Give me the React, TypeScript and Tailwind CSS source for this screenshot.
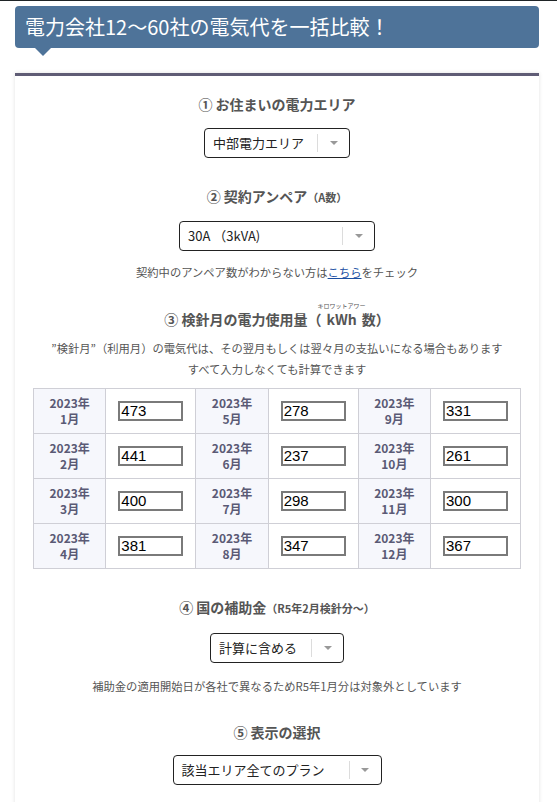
import React from 'react'

const jp = { fontFamily: '"Noto Sans CJK JP", "Noto Sans", sans-serif' }

const months = [
    { m: '1月', v: '473' }, { m: '5月', v: '278' }, { m: '9月', v: '331' },
    { m: '2月', v: '441' }, { m: '6月', v: '237' }, { m: '10月', v: '261' },
    { m: '3月', v: '400' }, { m: '7月', v: '298' }, { m: '11月', v: '300' },
    { m: '4月', v: '381' }, { m: '8月', v: '347' }, { m: '12月', v: '367' },
]

function Select({ label, width }: { label: string; width: string }) {
    return (
        <div className={`${width} h-[30px] mx-auto flex items-center border border-[#222] rounded-[4px] bg-white`}>
            <span className="flex-1 pl-[8px] text-[13px] text-[#222] whitespace-nowrap">{label}</span>
            <span className="w-px h-[18px] bg-[#dcdcdc]" />
            <span className="w-[31px] flex justify-center">
                <span className="block w-0 h-0 border-l-[4px] border-r-[4px] border-t-[4px] border-l-transparent border-r-transparent border-t-[#999]" />
            </span>
        </div>
    )
}

function Heading({ children }: { children: React.ReactNode }) {
    return (
        <h3 className="text-center text-[14px] leading-[20px] font-bold text-[#555]">{children}</h3>
    )
}

export default function App() {
    const rows = [0, 1, 2, 3]
    return (
        <div className="w-[557px] h-[802px] bg-white overflow-hidden" style={jp}>
            <div className="h-px bg-[#1f2427]" />
            <div className="px-[15px] pr-[18px] pt-[5px]">
                <div className="relative h-[42px] bg-[#4e7399] rounded-[4px] flex items-center pl-[10px]">
                    <h2 className="text-[20px] text-white leading-none">電力会社12～60社の電気代を一括比較！</h2>
                    <span className="absolute left-[20px] top-[42px] w-0 h-0 border-l-[8px] border-r-[8px] border-t-[8px] border-l-transparent border-r-transparent border-t-[#4e7399]" />
                </div>

                <div className="mt-[25px] border-t-[3px] border-[#5f5c75] bg-white shadow-[0_0_4px_rgba(0,0,0,0.12)] pt-[18px] pb-[20px] px-[18px]">
                    <Heading>① お住まいの電力エリア</Heading>
                    <div className="mt-[14px]"><Select label="中部電力エリア" width="w-[146px]" /></div>

                    <div className="mt-[28px]">
                        <Heading>② 契約アンペア<span className="text-[11px]">（A数）</span></Heading>
                    </div>
                    <div className="mt-[14px]"><Select label="30A （3kVA)" width="w-[196px]" /></div>
                    <p className="mt-[12px] text-center text-[11.3px] leading-[18px] text-[#555]">
                        契約中のアンペア数がわからない方は<a className="text-[#1a4fa3] underline">こちら</a>をチェック
                    </p>

                    <div className="mt-[28px]">
                        <Heading>
                            ③ 検針月の電力使用量（
                            <span className="relative inline-block px-[5px]">
                                kWh
                                <span className="absolute -left-[20px] -right-[20px] -top-[6px] text-center text-[6px] leading-none font-normal whitespace-nowrap">キロワットアワー</span>
                            </span>
                            数）
                        </Heading>
                    </div>
                    <p className="mt-[9px] text-center text-[11.3px] leading-[21px] text-[#555]">
                        ”検針月”（利用月）の電気代は、その翌月もしくは翌々月の支払いになる場合もあります<br />
                        すべて入力しなくても計算できます
                    </p>

                    <table className="mt-[8px] w-full border-collapse border border-[#cfcfd6]">
                        <tbody>
                            {rows.map((r) => (
                                <tr key={r} className="h-[45px]">
                                    {months.slice(r * 3, r * 3 + 3).map((c) => (
                                        <React.Fragment key={c.m}>
                                            <td className="w-[73px] border border-[#cfcfd6] bg-[#f6f7fc] text-center text-[12px] leading-[16px] font-bold text-[#5a5a75]">
                                                2023年<br />{c.m}
                                            </td>
                                            <td className="border border-[#cfcfd6] px-[12px]">
                                                <div className="w-[65px] h-[20px] border-2 border-[#7a7a7a] flex items-center pl-[1px] text-[15px] text-black" style={{ fontFamily: '"Liberation Sans", Arial, sans-serif' }}>
                                                    {c.v}
                                                </div>
                                            </td>
                                        </React.Fragment>
                                    ))}
                                </tr>
                            ))}
                        </tbody>
                    </table>

                    <div className="mt-[28px]">
                        <Heading>④ 国の補助金<span className="text-[11px]">（R5年2月検針分〜）</span></Heading>
                    </div>
                    <div className="mt-[15px]"><Select label="計算に含める" width="w-[134px]" /></div>
                    <p className="mt-[14px] text-center text-[11.3px] leading-[18px] text-[#555]">
                        補助金の適用開始日が各社で異なるためR5年1月分は対象外としています
                    </p>

                    <div className="mt-[27px]">
                        <Heading>⑤ 表示の選択</Heading>
                    </div>
                    <div className="mt-[13px]"><Select label="該当エリア全てのプラン" width="w-[209px]" /></div>
                </div>
            </div>
        </div>
    )
}
